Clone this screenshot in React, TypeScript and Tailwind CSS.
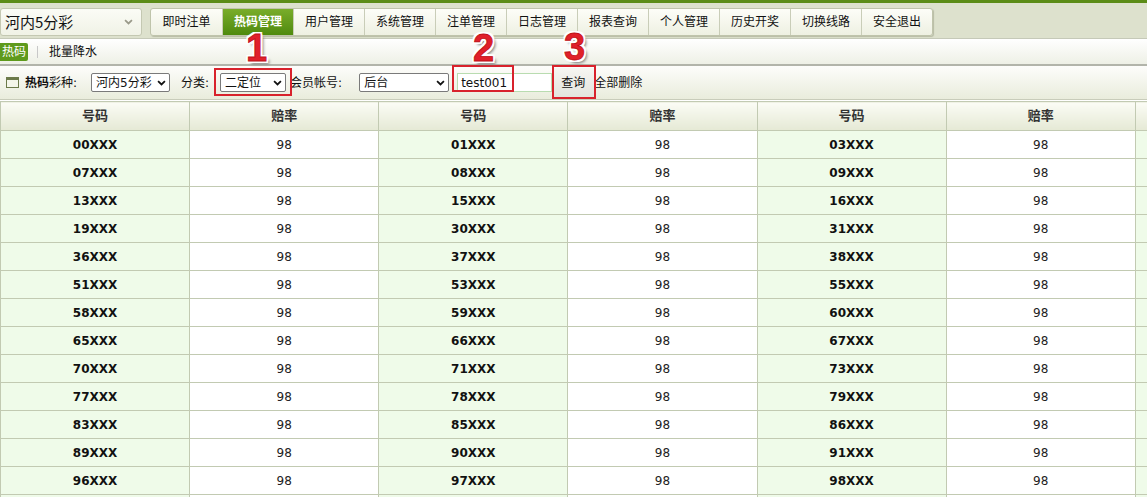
import React from "react";

const tabs = ["即时注单", "热码管理", "用户管理", "系统管理", "注单管理", "日志管理", "报表查询", "个人管理", "历史开奖", "切换线路", "安全退出"];

const cols: string[][] = [
  ["00", "07", "13", "19", "36", "51", "58", "65", "70", "77", "83", "89", "96"],
  ["01", "08", "15", "30", "37", "53", "59", "66", "71", "78", "85", "90", "97"],
  ["03", "09", "16", "31", "38", "55", "60", "67", "73", "79", "86", "91", "98"],
];

const Chevron = ({ className = "" }: { className?: string }) => (
  <svg viewBox="0 0 10 7" className={className} width="9" height="6">
    <path d="M1 1.2 L5 5.2 L9 1.2" fill="none" stroke="currentColor" strokeWidth="2" />
  </svg>
);

const Sel = ({ w, text }: { w: string; text: string }) => (
  <div className={`${w} h-[19px] border border-[#7a7a7a] rounded-[2px] bg-white flex items-center justify-between pl-[4px] pr-[3px] text-[12px] text-[#111] leading-none`}>
    <span>{text}</span>
    <Chevron className="text-[#111]" />
  </div>
);

const Num = ({ n, x, y }: { n: string; x: string; y: string }) => (
  <div
    className={`absolute ${x} ${y} text-[38px] leading-none font-bold text-[#e0202a] [font-family:'Liberation_Sans',Arial,sans-serif] [-webkit-text-stroke:0.8px_#c01018] [text-shadow:0_0_1px_#fff,2px_0_0_#fff,-2px_0_0_#fff,0_2px_0_#fff,0_-2px_0_#fff,2px_2px_0_#fff,-2px_-2px_0_#fff,2px_-2px_0_#fff,-2px_2px_0_#fff,3px_3px_3px_#777]`}
  >
    {n}
  </div>
);

const thCls = "border border-[#c2cab2] bg-gradient-to-b from-[#fbfcf5] to-[#e5e9d5] text-[13px] font-bold text-[#333]";

export default function App() {
  return (
    <div className="relative w-[1147px] h-[497px] overflow-hidden bg-white [font-family:'DejaVu_Sans','Noto_Sans_CJK_SC',sans-serif] text-[#222]">
      <div className="h-[3px] bg-[#5b8c17]" />
      {/* header */}
      <div className="h-[35px] bg-[#dde1cd] flex items-center">
        <div className="w-[142px] h-[28px] mt-[3px] border border-[#c4c8b2] rounded-[3px] bg-gradient-to-b from-[#fbfcf6] to-[#f0f2e6] flex items-center justify-between pl-[4px] pr-[8px]">
          <span className="text-[15px] text-[#111] [font-family:'Noto_Sans_CJK_SC',sans-serif]">河内5分彩</span>
          <Chevron className="text-[#9a9a8a]" />
        </div>
        <div className="ml-[8px] mt-[3px] flex h-[28px] border border-[#bfc4ab] rounded-[3px] shadow-[1px_1px_1px_#b8bca6] bg-gradient-to-b from-[#fdfdf8] to-[#eef0e2]">
          {tabs.map((t, i) => (
            <div
              key={t}
              className={`w-[71px] flex items-center justify-center text-[12px] ${i > 0 ? "border-l border-[#c9cdb8]" : ""} ${
                i === 1 ? "bg-gradient-to-b from-[#79ad2a] to-[#4f8a0d] text-white font-bold" : "text-[#111]"
              }`}
            >
              {t}
            </div>
          ))}
        </div>
      </div>
      {/* sub row */}
      <div className="h-[26px] bg-gradient-to-b from-[#ffffff] to-[#eef0e6] flex items-center border-t border-[#c5c9b8]">
        <div className="h-[18px] px-[2px] bg-[#5e9a1c] text-white text-[12px] flex items-center rounded-r-[2px]">热码</div>
        <div className="ml-[9px] w-px h-[12px] bg-[#c8c8c8]" />
        <div className="ml-[11px] text-[12px] text-[#111]">批量降水</div>
      </div>
      <div className="h-[2px] bg-[#b2b4aa]" />
      {/* filter bar */}
      <div className="h-[34px] bg-gradient-to-b from-[#fdfdfb] to-[#e9ecdc] flex items-center text-[12px] text-[#111] border-b border-[#c8ccba]">
        <div className="ml-[6px] w-[13px] h-[11px] border border-[#6c7a4a] border-t-[3px] bg-[#f4f6ea]" />
        <span className="ml-[6px] font-bold">热码</span>
        <span>彩种:</span>
        <div className="ml-[14px]"><Sel w="w-[79px]" text="河内5分彩" /></div>
        <span className="ml-[11px]">分类:</span>
        <div className="ml-[11px]"><Sel w="w-[66px]" text="二定位" /></div>
        <span className="ml-[4px]">会员帐号:</span>
        <div className="ml-[17px]"><Sel w="w-[90px]" text="后台" /></div>
        <div className="ml-[8px] w-[95px] h-[19px] border border-[#b9dcb0] bg-white flex items-center pl-[3px] text-[12px]">test001</div>
        <div className="w-[42px] h-[30px] flex items-center justify-center bg-gradient-to-b from-[#f6f6f2] to-[#e2e3dc]">查询</div>
        <span>全部删除</span>
      </div>
      {/* table */}
      <div className="mt-[1px]">
        <table className="table-fixed border-collapse w-[1514px] text-center">
          <colgroup>
            {Array.from({ length: 8 }).map((_, i) => (
              <col key={i} className="w-[189px]" />
            ))}
          </colgroup>
          <thead>
            <tr className="h-[29px]">
              {cols.map((_, i) => (
                <React.Fragment key={i}>
                  <th className={thCls}>号码</th>
                  <th className={thCls}>赔率</th>
                </React.Fragment>
              ))}
              <th className={thCls}></th>
              <th className={thCls}></th>
            </tr>
          </thead>
          <tbody>
            {cols[0].map((_, r) => (
              <tr key={r} className="h-[28px]">
                {cols.map((c, ci) => (
                  <React.Fragment key={ci}>
                    <td className="border border-[#c2cab2] bg-[#effbe9] text-[12px] font-bold text-[#111]">{c[r]}XXX</td>
                    <td className="border border-[#c2cab2] bg-white text-[12px] text-[#222]">98</td>
                  </React.Fragment>
                ))}
                <td className="border border-[#c2cab2] bg-[#effbe9]"></td>
                <td className="border border-[#c2cab2] bg-white"></td>
              </tr>
            ))}
            <tr className="h-[28px]">
              {Array.from({ length: 4 }).map((_, i) => (
                <React.Fragment key={i}>
                  <td className="border border-[#c2cab2] bg-[#effbe9]"></td>
                  <td className="border border-[#c2cab2] bg-white"></td>
                </React.Fragment>
              ))}
            </tr>
          </tbody>
        </table>
      </div>
      {/* annotations */}
      <div className="absolute left-[214px] top-[68px] w-[78px] h-[28px] border-2 border-[#d8222c]" />
      <div className="absolute left-[452px] top-[65px] w-[62px] h-[27px] border-2 border-[#d8222c]" />
      <div className="absolute left-[552px] top-[65px] w-[44px] h-[34px] border-2 border-[#d8222c]" />
      <Num n="1" x="left-[246px]" y="top-[29px]" />
      <Num n="2" x="left-[473px]" y="top-[29px]" />
      <Num n="3" x="left-[564px]" y="top-[28px]" />
    </div>
  );
}
